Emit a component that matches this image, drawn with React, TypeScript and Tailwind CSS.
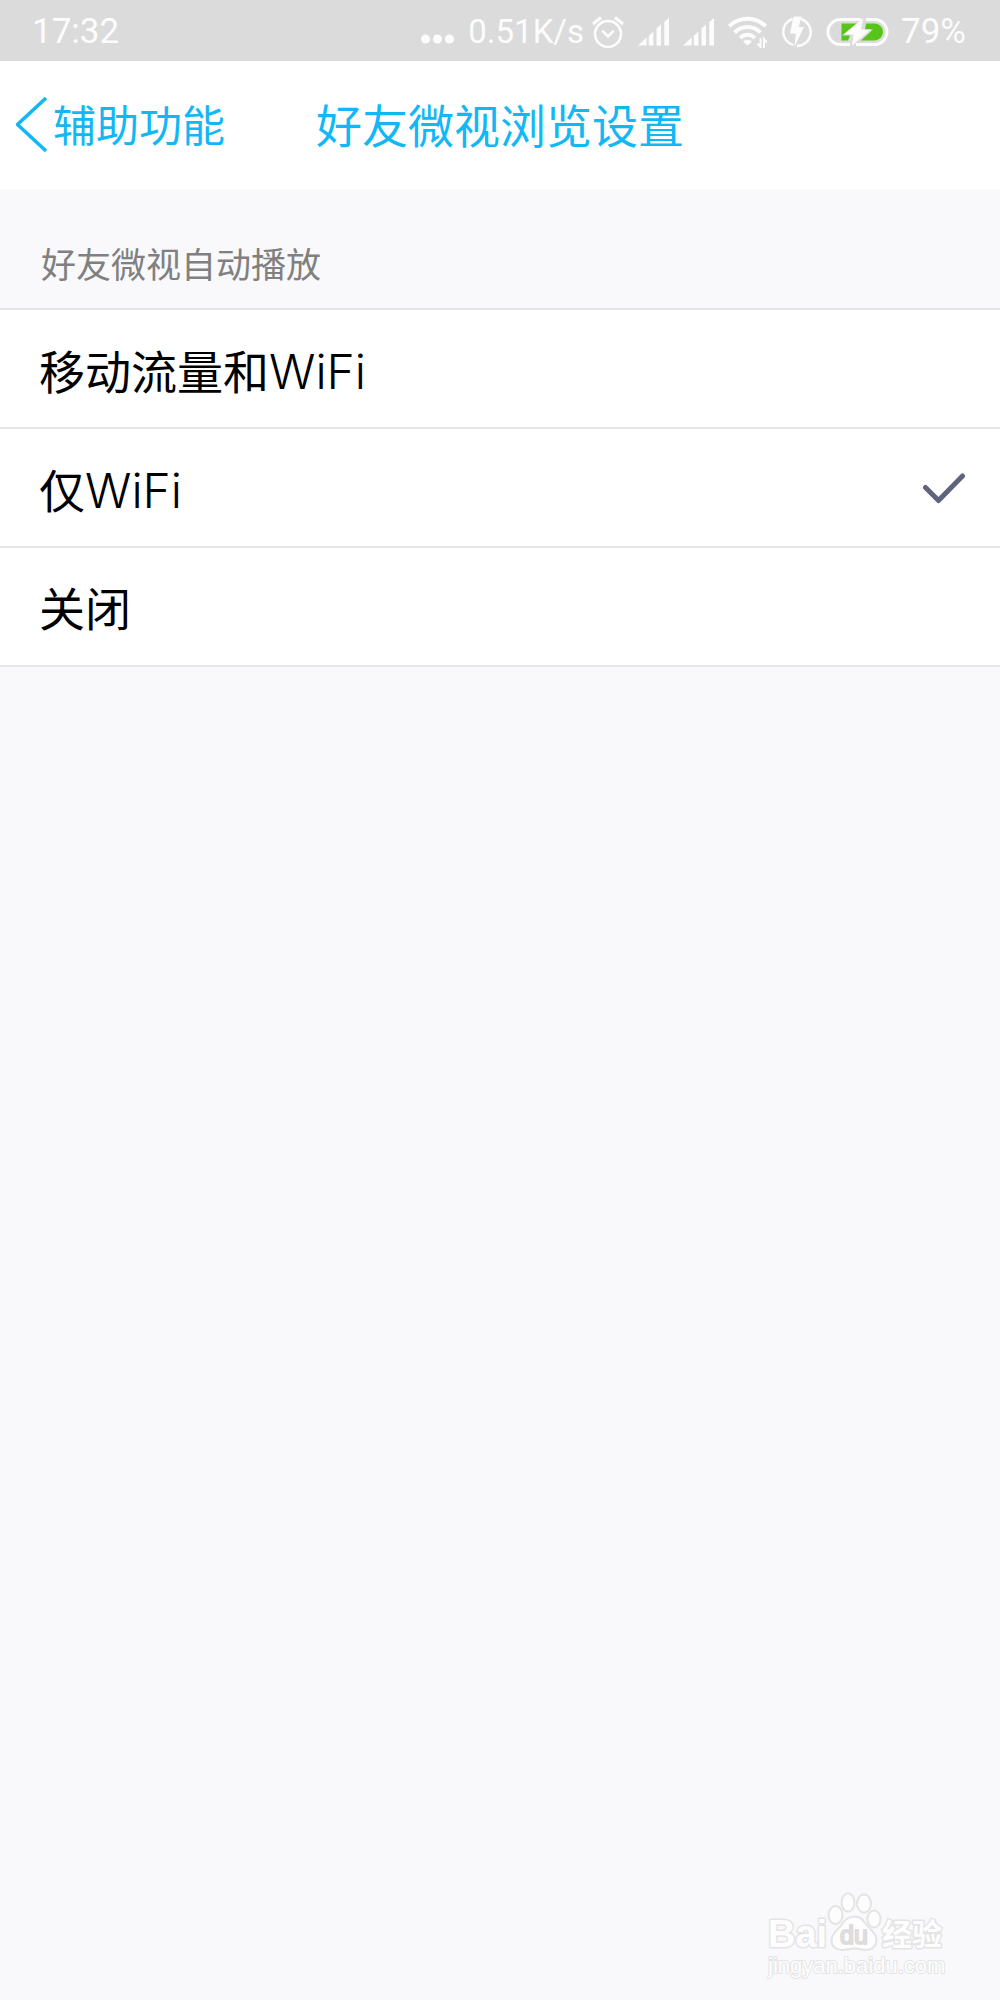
import React, { useState } from 'react';

const OPTIONS = [
  { value: 'all', label: '移动流量和', network: 'WiFi' },
  { value: 'wifi', label: '仅', network: 'WiFi' },
  { value: 'off', label: '关闭', network: '' },
];

const AlarmIcon: React.FC = () => (
  <svg width="32" height="34" viewBox="0 0 32 34" fill="none" stroke="currentColor" strokeWidth="2.6" aria-hidden="true">
    <circle cx="16" cy="19" r="13" />
    <path d="M11 16.500l5 5 5-5" strokeLinecap="round" />
    <path d="M1 9l8-6.500M31 9l-8-6.500" strokeWidth="3" />
  </svg>
);

const SignalIcon: React.FC = () => (
  <svg width="31" height="28" viewBox="0 0 31 28" fill="currentColor" aria-hidden="true">
    <path d="M0 27.5L8.6 19.5V27.5z" />
    <path d="M10.8 18l4.6-4.4v13.9h-4.6z" />
    <path d="M18.5 10.3L23 6.5v21h-4.5z" />
    <path d="M26.3 4L31 0v27.5h-4.7z" />
  </svg>
);

const WifiIcon: React.FC = () => (
  <svg width="39" height="32" viewBox="0 0 39 32" fill="none" stroke="currentColor" strokeWidth="4" aria-hidden="true">
    <path d="M1.3 10.2a26 26 0 0 1 36.4 0" />
    <path d="M6.5 16.500a18 18 0 0 1 26 0" />
    <path d="M12.200 22a10 10 0 0 1 14.600 0" />
    <path d="M15 25.500a6.500 6.500 0 0 1 9 0L19.500 29.500z" fill="currentColor" stroke="none" />
    <path d="M32.500 22v9l-3-3.500M36 32v-9l3 3.500" strokeWidth="2" />
  </svg>
);

const BoltIcon: React.FC = () => (
  <svg width="31" height="32" viewBox="0 0 31 32" aria-hidden="true">
    <g fill="none" stroke="currentColor" strokeWidth="2.4">
      <path d="M11.500 2.800A13.800 13.800 0 0 0 12.500 29.200" />
      <path d="M20 3A13.800 13.800 0 0 1 16 30" />
    </g>
    <path d="M12.500 0.500h8l-2.800 10.500h5.300L13.500 31l1.300-13.500H9z" fill="currentColor" />
  </svg>
);

const BatteryIcon: React.FC = () => (
  <svg width="63" height="30" viewBox="0 0 63 30" aria-hidden="true">
    <path d="M35 2.500H14.500a12.500 12.500 0 0 0 0 25H24" fill="none" stroke="currentColor" strokeWidth="3" />
    <path d="M40 2.500h8.500a12.500 12.500 0 0 1 0 25H30" fill="none" stroke="currentColor" strokeWidth="3" />
    <path d="M15.500 6.500H30.500L16 18.500h8L22 23.500h-6.500z" fill="#57c518" />
    <path d="M40 6.500h8.500a8.500 8.500 0 0 1 0 17H35l12-11h-8z" fill="#57c518" />
    <path d="M37.500 1L18 17.500h9.500L26 28.500l19-16H35z" fill="currentColor" />
  </svg>
);

const StatusBar: React.FC = () => (
  <div className="flex h-[61px] items-center justify-between bg-[#dbdbdb] pt-[2px] pr-[34px] pl-8 font-['Roboto',sans-serif] text-[35px] leading-none text-[#fcfcfc]">
    <span>17:32</span>
    <div className="flex items-center gap-[14px]">
      <svg width="33" height="28" viewBox="0 0 33 28" fill="currentColor" aria-hidden="true">
        <circle cx="4.5" cy="21" r="4.5" />
        <circle cx="16.5" cy="21" r="4.5" />
        <circle cx="28.5" cy="21" r="4.5" />
      </svg>
      <div className="flex items-center gap-2">
        <span className="text-[33px]">0.51K/s</span>
        <AlarmIcon />
      </div>
      <SignalIcon />
      <SignalIcon />
      <WifiIcon />
      <BoltIcon />
      <div className="flex items-center gap-3">
        <BatteryIcon />
        <span>79%</span>
      </div>
    </div>
  </div>
);

const Watermark: React.FC = () => (
  <svg width="184" height="92" viewBox="0 0 184 92" fill="#fdfdfd" stroke="#e4e4e5" strokeWidth="2" strokeLinejoin="round" role="img" aria-label="Baidu 经验">
    <text x="1" y="55" fontSize="38" strokeWidth="3" className="font-['Liberation_Sans',sans-serif] font-bold [paint-order:stroke]">Bai</text>
    <ellipse cx="68.5" cy="23" rx="7" ry="9" />
    <ellipse cx="81" cy="10.500" rx="6.500" ry="9" />
    <ellipse cx="97" cy="11.500" rx="7" ry="9" />
    <ellipse cx="107" cy="27" rx="6.500" ry="8.500" />
    <path d="M87.500 24.500c-7 0-10 4-13 8.500-3 4-10 8-10 15.500 0 6 5 9.500 10.500 9.500 4 0 8-1.500 12.500-1.500s8 1.500 12 1.500c5.500 0 10-4 10-10 0-7-6.500-10.500-10-15-3-4-5-8.500-12-8.500z" />
    <text x="73" y="52" fontSize="25" className="fill-[#f8f8f9] stroke-[#dcdcdd] font-['Liberation_Sans',sans-serif]">du</text>
    <text x="115" y="53" fontSize="30" strokeWidth="3" className="font-['Noto_Sans_CJK_SC',sans-serif] font-bold [paint-order:stroke]">经验</text>
    <text x="1" y="81" fontSize="22" className="font-['Liberation_Sans',sans-serif] [paint-order:stroke]">jingyan.baidu.com</text>
  </svg>
);

const App: React.FC = () => {
  const [selected, setSelected] = useState('wifi');

  return (
    <div className="flex min-h-screen flex-col bg-[#f9f9fb] font-['Liberation_Sans','Noto_Sans_CJK_SC',sans-serif]">
      <StatusBar />

      <header className="grid h-32 grid-cols-[1fr_auto_1fr] items-center bg-white px-4 text-[#12b7f5]">
        <button type="button" className="flex items-center gap-[6px] text-[43px] leading-none">
          <svg width="31" height="56" viewBox="0 0 31 56" fill="none" stroke="currentColor" strokeWidth="3.5" aria-hidden="true">
            <path d="M30 1L1.500 27.500 30 54" />
          </svg>
          <span className="pt-1">辅助功能</span>
        </button>
        <h1 className="pt-1 text-[46px] leading-none">好友微视浏览设置</h1>
      </header>

      <fieldset>
        <legend className="flex h-[119px] w-full items-end px-[41px] pb-[22px] text-[35px] leading-10 text-[#808080]">
          好友微视自动播放
        </legend>
        <div className="border-t-2 border-[#e5e6e8] bg-white">
          {OPTIONS.map((option) => (
            <label
              key={option.value}
              className="flex h-[119px] cursor-pointer items-center justify-between border-b-2 border-[#e5e6e8] pr-[34px] pl-[39px] text-[46px] leading-none text-black"
            >
              <input
                type="radio"
                name="autoplay"
                value={option.value}
                checked={selected === option.value}
                onChange={() => setSelected(option.value)}
                className="sr-only"
              />
              <span className="flex items-baseline pt-[6px]">
                {option.label}
                {option.network && (
                  <span className="font-['Inter',sans-serif] text-[48px] leading-none font-light">{option.network}</span>
                )}
              </span>
              {selected === option.value && (
                <svg width="44" height="32" viewBox="0 0 44 32" fill="none" stroke="#5f647c" strokeWidth="5" strokeLinecap="round" strokeLinejoin="round" aria-hidden="true">
                  <path d="M3.500 15.500L16.500 28.500 40.500 4" />
                </svg>
              )}
            </label>
          ))}
        </div>
      </fieldset>

      <footer className="mt-auto flex justify-end pr-[49px] pb-4">
        <Watermark />
      </footer>
    </div>
  );
};

export default App;
